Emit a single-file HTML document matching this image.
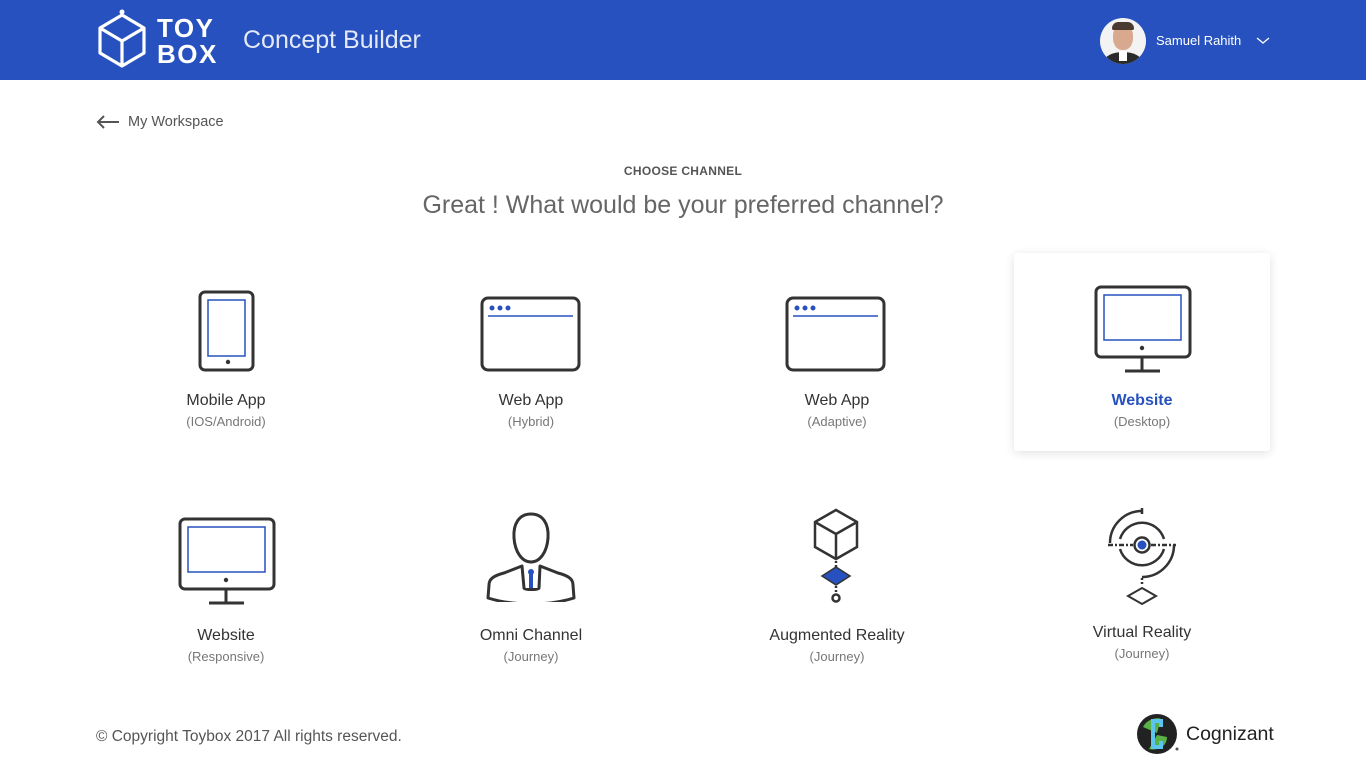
<!DOCTYPE html>
<html><head><meta charset="utf-8"><style>
*{margin:0;padding:0;box-sizing:border-box}
body{width:1366px;height:768px;background:#fff;font-family:"Liberation Sans",sans-serif;position:relative;overflow:hidden;color:#333}
.hdr{position:absolute;left:0;top:0;width:1366px;height:80px;background:#2651be}
.abs{position:absolute}
.t{position:absolute;width:256px;text-align:center;font-size:16px;color:#333}
.s{position:absolute;width:256px;text-align:center;font-size:13px;color:#777}
svg.i{position:absolute}
</style></head><body>
<div class="hdr">
<svg class="abs" style="left:96px;top:9px" width="52" height="60" viewBox="0 0 52 60" fill="none" stroke="#fff" stroke-width="3.2" stroke-linejoin="round"><circle cx="26" cy="3" r="2.5" fill="#fff" stroke="none"/><path d="M26 6 L48 19 L48 44 L26 57 L4 44 L4 19 Z M4 19 L26 32 L48 19 M26 32 L26 57"/></svg>
<div class="abs" style="left:157px;top:15px;color:#fff;font-weight:bold;font-size:26px;line-height:26px;letter-spacing:1.5px">TOY<br>BOX</div>
<div class="abs" style="left:243px;top:25px;color:#e4e9f7;font-size:25px;line-height:30px">Concept Builder</div>
<div class="abs" style="left:1100px;top:18px;width:46px;height:46px;border-radius:50%;background:#f3f3f3;overflow:hidden"><div style="position:absolute;left:13px;top:6px;width:20px;height:26px;border-radius:45%;background:#d8a98f"></div><div style="position:absolute;left:12px;top:4px;width:22px;height:8px;border-radius:8px 8px 2px 2px;background:#4a3a30"></div><div style="position:absolute;left:4px;top:34px;width:38px;height:20px;border-radius:50% 50% 0 0;background:#2a2a2a"></div><div style="position:absolute;left:19px;top:33px;width:8px;height:10px;background:#fff"></div></div>
<div class="abs" style="left:1156px;top:33px;color:#fff;font-size:13px">Samuel Rahith</div>
<svg class="abs" style="left:1256px;top:37px" width="14" height="8" viewBox="0 0 14 8" fill="none" stroke="#fff" stroke-width="1.3"><path d="M1 1 L7 6 L13 1"/></svg>
</div>
<svg class="abs" style="left:96px;top:115px" width="24" height="14" viewBox="0 0 24 14" fill="none" stroke="#555" stroke-width="2"><path d="M23 7 H2 M8 1 L2 7 L8 13"/></svg>
<div class="abs" style="left:128px;top:114px;font-size:14.5px;color:#555">My Workspace</div>
<div class="abs" style="left:0;top:164px;width:1366px;text-align:center;font-size:12px;font-weight:bold;color:#555;letter-spacing:.3px">CHOOSE CHANNEL</div>
<div class="abs" style="left:0;top:191px;width:1366px;text-align:center;font-size:25px;color:#666">Great ! What would be your preferred channel?</div>

<div class="abs" style="left:1014px;top:253px;width:256px;height:198px;background:#fff;box-shadow:0 2px 10px rgba(0,0,0,.12);border-radius:3px"></div>

<svg class="i" style="left:190px;top:285px" width="72" height="92" fill="none" stroke-width="3"><rect x="10" y="7" width="53" height="78" rx="5" stroke="#333"/><rect x="18" y="15" width="37" height="56" stroke="#2651be" stroke-width="1.5"/><circle cx="38" cy="77" r="2.2" fill="#333" stroke="none"/></svg>
<div class="t" style="left:98px;top:392px">Mobile App</div><div class="s" style="left:98px;top:414px">(IOS/Android)</div>
<svg class="i" style="left:478px;top:294px" width="106" height="80" fill="none" stroke-width="3"><rect x="4" y="4" width="97" height="72" rx="6" stroke="#333"/><circle cx="14" cy="14" r="2.5" fill="#2651be" stroke="none"/><circle cx="22" cy="14" r="2.5" fill="#2651be" stroke="none"/><circle cx="30" cy="14" r="2.5" fill="#2651be" stroke="none"/><path d="M10 22 H95" stroke="#2651be" stroke-width="1.5"/></svg>
<div class="t" style="left:403px;top:392px">Web App</div><div class="s" style="left:403px;top:414px">(Hybrid)</div>
<svg class="i" style="left:783px;top:294px" width="106" height="80" fill="none" stroke-width="3"><rect x="4" y="4" width="97" height="72" rx="6" stroke="#333"/><circle cx="14" cy="14" r="2.5" fill="#2651be" stroke="none"/><circle cx="22" cy="14" r="2.5" fill="#2651be" stroke="none"/><circle cx="30" cy="14" r="2.5" fill="#2651be" stroke="none"/><path d="M10 22 H95" stroke="#2651be" stroke-width="1.5"/></svg>
<div class="t" style="left:709px;top:392px">Web App</div><div class="s" style="left:709px;top:414px">(Adaptive)</div>
<svg class="i" style="left:1092px;top:283px" width="102" height="92" fill="none" stroke-width="3"><rect x="4" y="4" width="94" height="70" rx="5" stroke="#333"/><rect x="12" y="12" width="77" height="45" stroke="#2651be" stroke-width="1.5"/><circle cx="50" cy="65" r="2.2" fill="#333" stroke="none"/><path d="M50 74 V87 M33 88 H68" stroke="#333"/></svg>
<div class="t" style="left:1014px;top:392px;color:#2651be;font-weight:bold">Website</div><div class="s" style="left:1014px;top:414px">(Desktop)</div>
<svg class="i" style="left:176px;top:515px" width="102" height="92" fill="none" stroke-width="3"><rect x="4" y="4" width="94" height="70" rx="5" stroke="#333"/><rect x="12" y="12" width="77" height="45" stroke="#2651be" stroke-width="1.5"/><circle cx="50" cy="65" r="2.2" fill="#333" stroke="none"/><path d="M50 74 V87 M33 88 H68" stroke="#333"/></svg>
<div class="t" style="left:98px;top:627px">Website</div><div class="s" style="left:98px;top:649px">(Responsive)</div>
<svg class="i" style="left:484px;top:510px" width="94" height="92" fill="none" stroke="#333" stroke-width="3"><path d="M47 4 C35 4 29 14 30 28 C31 42 38 52 47 52 C56 52 63 42 64 28 C65 14 59 4 47 4 Z"/><path d="M38 56 L20 63 C8 66 5 70 5 75 L4 88 C30 96 64 96 90 88 L89 75 C89 70 86 66 74 63 L56 56 L55 78 C55 80 40 80 40 78 Z" stroke-linejoin="round"/><path d="M47 62 V78" stroke="#2651be" stroke-width="4"/><circle cx="47" cy="62" r="3" fill="#2651be" stroke="none"/></svg>
<div class="t" style="left:403px;top:627px">Omni Channel</div><div class="s" style="left:403px;top:649px">(Journey)</div>
<svg class="i" style="left:810px;top:507px" width="52" height="98" fill="none" stroke="#333" stroke-width="2.5"><path d="M26 3 L47 15 L47 40 L26 52 L5 40 L5 15 Z M5 15 L26 27 L47 15 M26 27 V52"/><path d="M26 54 V60" stroke-dasharray="2 2"/><path d="M26 60 L40 69 L26 78 L12 69 Z" fill="#2651be" stroke="#333" stroke-width="1.5"/><path d="M26 79 V86" stroke-dasharray="2 2"/><circle cx="26" cy="91" r="3.5"/></svg>
<div class="t" style="left:709px;top:627px">Augmented Reality</div><div class="s" style="left:709px;top:649px">(Journey)</div>
<!-- VR: center (36,37) -->
<svg class="i" style="left:1106px;top:506px" width="74" height="100" fill="none" stroke="#333" stroke-width="2.5"><path d="M36 2 V8"/><path d="M36 5 A32 32 0 0 0 4 37"/><path d="M68 39 A32 32 0 0 1 36 71"/><path d="M14 33 A23 23 0 0 1 58 33"/><path d="M14 43 A23 23 0 0 0 58 43"/><path d="M2 39 H27 M45 39 H70" stroke-dasharray="5 2 2 2"/><circle cx="36" cy="39" r="7.5"/><circle cx="36" cy="39" r="4.5" fill="#2651be" stroke="none"/><path d="M36 72 V80" stroke-dasharray="2 2"/><path d="M36 82 L50 90 L36 98 L22 90 Z" stroke-width="2"/></svg>
<div class="t" style="left:1014px;top:624px">Virtual Reality</div><div class="s" style="left:1014px;top:646px">(Journey)</div>

<div class="abs" style="left:96px;top:728px;font-size:15.5px;color:#555">&copy; Copyright Toybox 2017 All rights reserved.</div>
<svg class="abs" style="left:1137px;top:713px" width="42" height="42" viewBox="0 0 42 42"><circle cx="20" cy="21" r="20" fill="#222"/><path d="M6 14 C10 6 20 4 24 6 L20 20 Z" fill="#5ab246"/><path d="M30 24 C30 34 20 38 12 36 L20 22 Z" fill="#5ab246"/><path d="M14 6 H26 V14 H22 V10 H18 V32 H22 V28 H26 V36 H14 Z" fill="#5bc4ef"/><circle cx="40" cy="36" r="1.5" fill="#555"/></svg>
<div class="abs" style="left:1186px;top:723px;font-size:19.5px;color:#222">Cognizant</div>
</body></html>
